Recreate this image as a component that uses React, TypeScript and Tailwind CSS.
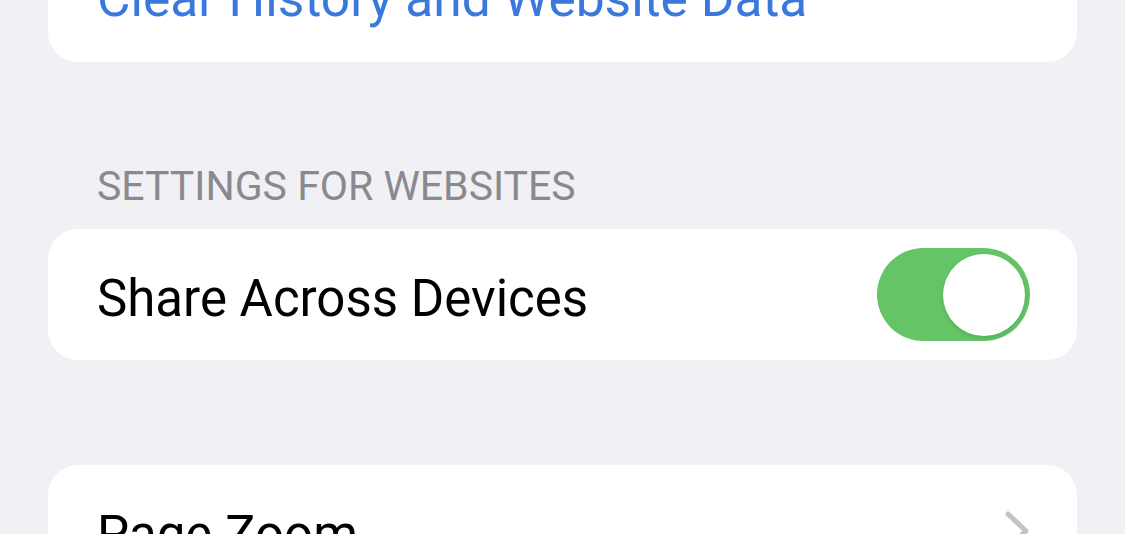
import React from "react";

function Toggle() {
  return (
    <div className="flex h-[93px] w-[153px] shrink-0 items-center justify-end rounded-full bg-[#64c466] pr-[5px]">
      <div className="h-[82px] w-[82px] rounded-full bg-white shadow-[0_2px_4px_rgba(0,0,0,0.12)]" />
    </div>
  );
}

function Chevron() {
  return (
    <svg width="26" height="42" viewBox="0 0 26 42" className="shrink-0">
      <path d="M4 4 L22 21 L4 38" fill="none" stroke="#c4c4c7" strokeWidth="5" strokeLinecap="round" strokeLinejoin="round" />
    </svg>
  );
}

export default function App() {
  return (
    <div
      className="h-[534px] w-full overflow-hidden bg-[#f0f0f5] px-[48px]"
      style={{ fontFamily: "Roboto, 'Liberation Sans', sans-serif" }}
    >
      <div className="h-[62px] overflow-hidden rounded-b-[30px] bg-white pl-[49px]">
        <div className="mt-[-27px] text-[51.5px] leading-[51px] text-[#3a78de] whitespace-nowrap">
          Clear History and Website Data
        </div>
      </div>

      <div className="mt-[104px] mb-[22px] pl-[49px] text-[41px] leading-[41px] text-[#8a8a8e] whitespace-nowrap">
        SETTINGS FOR WEBSITES
      </div>

      <div className="flex h-[131px] items-center justify-between rounded-[30px] bg-white pl-[49px] pr-[47px]">
        <div className="mt-[8px] text-[51px] leading-[51px] text-black whitespace-nowrap">Share Across Devices</div>
        <Toggle />
      </div>

      <div className="mt-[105px] flex h-[131px] items-center justify-between rounded-[30px] bg-white pl-[49px] pr-[47px]">
        <div className="mt-[8px] text-[51px] leading-[51px] text-black whitespace-nowrap">Page Zoom</div>
        <Chevron />
      </div>
    </div>
  );
}
